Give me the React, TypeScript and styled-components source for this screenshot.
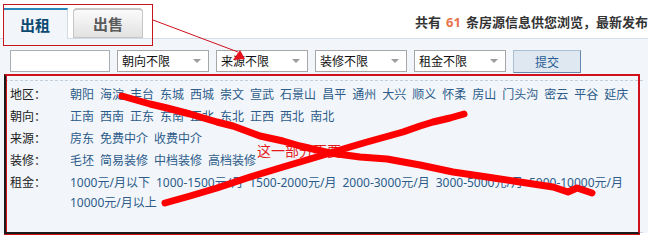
import styled, { createGlobalStyle } from 'styled-components';

const selects = ['朝向不限', '来源不限', '装修不限', '租金不限'];

const filters = [
    {
        label: '地区',
        options: ['朝阳', '海淀', '丰台', '东城', '西城', '崇文', '宣武', '石景山', '昌平', '通州', '大兴', '顺义', '怀柔', '房山', '门头沟', '密云', '平谷', '延庆'],
    },
    {
        label: '朝向',
        options: ['正南', '西南', '正东', '东南', '正北', '东北', '正西', '西北', '南北'],
    },
    { label: '来源', options: ['房东', '免费中介', '收费中介'] },
    { label: '装修', options: ['毛坯', '简易装修', '中档装修', '高档装修'] },
    {
        label: '租金',
        options: ['1000元/月以下', '1000-1500元/月', '1500-2000元/月', '2000-3000元/月', '3000-5000元/月', '5000-10000元/月', '10000元/月以上'],
    },
];

// freehand strokes drawn over the screenshot
const strokeOne = '122,96 150,104 167,108 190,114 217,122 233,126 260,136 283,141 300,146 330,153 360,157 387,159 420,165 453,172 487,177 520,182 553,187 568,192 577,188 592,193';
const strokeTwo = '165,203 190,196 217,188 250,177 283,167 310,159 330,153 350,147 367,142 385,137 403,132 420,126 433,122 450,118 464,114';

const App = () => {
    return (
        <>
            <GlobalStyle />
            <Page>
                <Header>
                    <TabBar>
                        <Tab $active>出租</Tab>
                        <Tab>出售</Tab>
                    </TabBar>
                    <Info>
                        共有<Count>61</Count>条房源信息供您浏览，最新发布
                    </Info>
                </Header>
                <Panel>
                    <SearchRow>
                        <Keyword type="text" />
                        {selects.map((s) => (
                            <FakeSelect key={s}>
                                {s}
                                <Caret />
                            </FakeSelect>
                        ))}
                        <SubmitButton>提交</SubmitButton>
                    </SearchRow>
                    <FilterBox>
                        {filters.map((f) => (
                            <FilterRow key={f.label}>
                                <FilterLabel>{f.label}：</FilterLabel>
                                <Options>
                                    {f.options.map((o) => (
                                        <Option href="#" key={o}>
                                            {o}
                                        </Option>
                                    ))}
                                </Options>
                            </FilterRow>
                        ))}
                    </FilterBox>
                </Panel>

                <TabMark />
                <FilterMark />
                <Note>这一部分不要</Note>
                <Scribble viewBox="0 0 648 240" width="648" height="240">
                    <line x1="153" y1="20" x2="238" y2="52" stroke="#d0101a" strokeWidth="1" />
                    <polygon points="240,50 233,60 245,59" fill="#e8121c" />
                    <polyline points={strokeOne} fill="none" stroke="#ff0000" strokeWidth="7" strokeLinecap="round" strokeLinejoin="round" />
                    <polyline points={strokeTwo} fill="none" stroke="#ff0000" strokeWidth="7" strokeLinecap="round" strokeLinejoin="round" />
                </Scribble>
            </Page>
        </>
    );
};

interface TabProps {
    $active?: boolean;
}

const GlobalStyle = createGlobalStyle`
    body {
        margin: 0;
        background: #fff;
        font-family: "Noto Sans", "Noto Sans CJK SC", sans-serif;
        overflow: hidden;
    }
`;

const Page = styled.div`
    position: relative;
    width: 648px;
    height: 240px;
    overflow: hidden;
    background: #fff;
`;

const Header = styled.div`
    display: grid;
    grid-template-columns: 415px 1fr;
    height: 38px;
    border-bottom: 1px solid #d3dde7;
`;

const TabBar = styled.div`
    display: flex;
    align-items: flex-end;
    gap: 5px;
    padding-left: 3px;
`;

const Tab = styled.div<TabProps>`
    box-sizing: border-box;
    display: flex;
    align-items: center;
    justify-content: center;
    width: ${(props) => (props.$active ? '65px' : '70px')};
    height: ${(props) => (props.$active ? '31px' : '30px')};
    margin-bottom: ${(props) => (props.$active ? '-1px' : '0')};
    font-size: 15px;
    font-weight: bold;
    color: ${(props) => (props.$active ? '#0d4a72' : '#5a5a5a')};
    background: ${(props) =>
        props.$active ? '#f2f6fb' : 'linear-gradient(#fbfbfb, #e2e2e2)'};
    border: ${(props) => (props.$active ? 'none' : '1px solid #c6c6c6')};
    border-top: 2px solid ${(props) => (props.$active ? '#2a86b8' : '#c6c6c6')};
    border-right: 1px solid ${(props) => (props.$active ? '#d2dbe4' : '#c6c6c6')};
    border-radius: ${(props) => (props.$active ? '0' : '4px 4px 0 0')};
`;

const Info = styled.div`
    padding-top: 13px;
    line-height: 18px;
    font-size: 13px;
    font-weight: bold;
    color: #333;
    white-space: nowrap;
`;

const Count = styled.span`
    padding: 0 5px 0 5px;
    color: #e8734a;
`;

const Panel = styled.div`
    padding: 11px 5px 0;
    background: #f2f6fb;
`;

const SearchRow = styled.div`
    display: flex;
    align-items: flex-start;
    gap: 7px;
    padding-left: 5px;
    height: 23px;
`;

const Keyword = styled.input`
    box-sizing: border-box;
    width: 100px;
    height: 22px;
    margin: 0;
    border: 1px solid #a7adb3;
    background: #fff;
    outline: none;
`;

const FakeSelect = styled.div`
    box-sizing: border-box;
    display: flex;
    align-items: center;
    justify-content: space-between;
    width: 92px;
    height: 22px;
    padding: 0 7px 0 4px;
    border: 1px solid #a7a7a7;
    background: #fff;
    font-size: 12px;
    color: #111;
`;

const Caret = styled.span`
    width: 0;
    height: 0;
    border-left: 4px solid transparent;
    border-right: 4px solid transparent;
    border-top: 4px solid #9c9c9c;
`;

const SubmitButton = styled.button`
    box-sizing: border-box;
    width: 68px;
    height: 23px;
    margin: 0;
    padding: 0;
    background: #dfe8f1;
    border: 1px solid #a9bfd4;
    border-right-color: #6487ab;
    border-bottom-color: #6487ab;
    font-family: inherit;
    font-size: 12px;
    color: #2a5d92;
`;

const FilterBox = styled.div`
    margin-top: 7px;
    padding: 3px 5px 18px;
    border-top: 1px dashed #c3cfdb;
    border-bottom: 1px solid #cdd6df;
`;

const FilterRow = styled.div`
    display: grid;
    grid-template-columns: 60px 1fr;
    padding: 1px 0;
    line-height: 20px;
    font-size: 12px;
`;

const FilterLabel = styled.div`
    color: #222;
`;

const Options = styled.div`
    display: flex;
    flex-wrap: wrap;
    column-gap: 6px;
`;

const Option = styled.a`
    color: #2d5c8a;
    text-decoration: none;
    white-space: nowrap;
`;

const TabMark = styled.div`
    position: absolute;
    left: 3px;
    top: 4px;
    width: 150px;
    height: 42px;
    box-sizing: border-box;
    border: 1.5px solid #c4161c;
`;

const FilterMark = styled.div`
    position: absolute;
    left: 4px;
    top: 74px;
    width: 636px;
    height: 160px;
    box-sizing: border-box;
    border: 2px solid #d0101a;
    border-left-color: #1b1b1b;
    border-bottom-color: #1b1b1b;
    box-shadow: inset 1px 0 0 #d0101a, 0 1px 0 #d0101a;
`;

const Note = styled.div`
    position: absolute;
    left: 257px;
    top: 142px;
    font-size: 14px;
    line-height: 17px;
    color: #e31b1b;
`;

const Scribble = styled.svg`
    position: absolute;
    left: 0;
    top: 0;
    pointer-events: none;
`;

export default App;
